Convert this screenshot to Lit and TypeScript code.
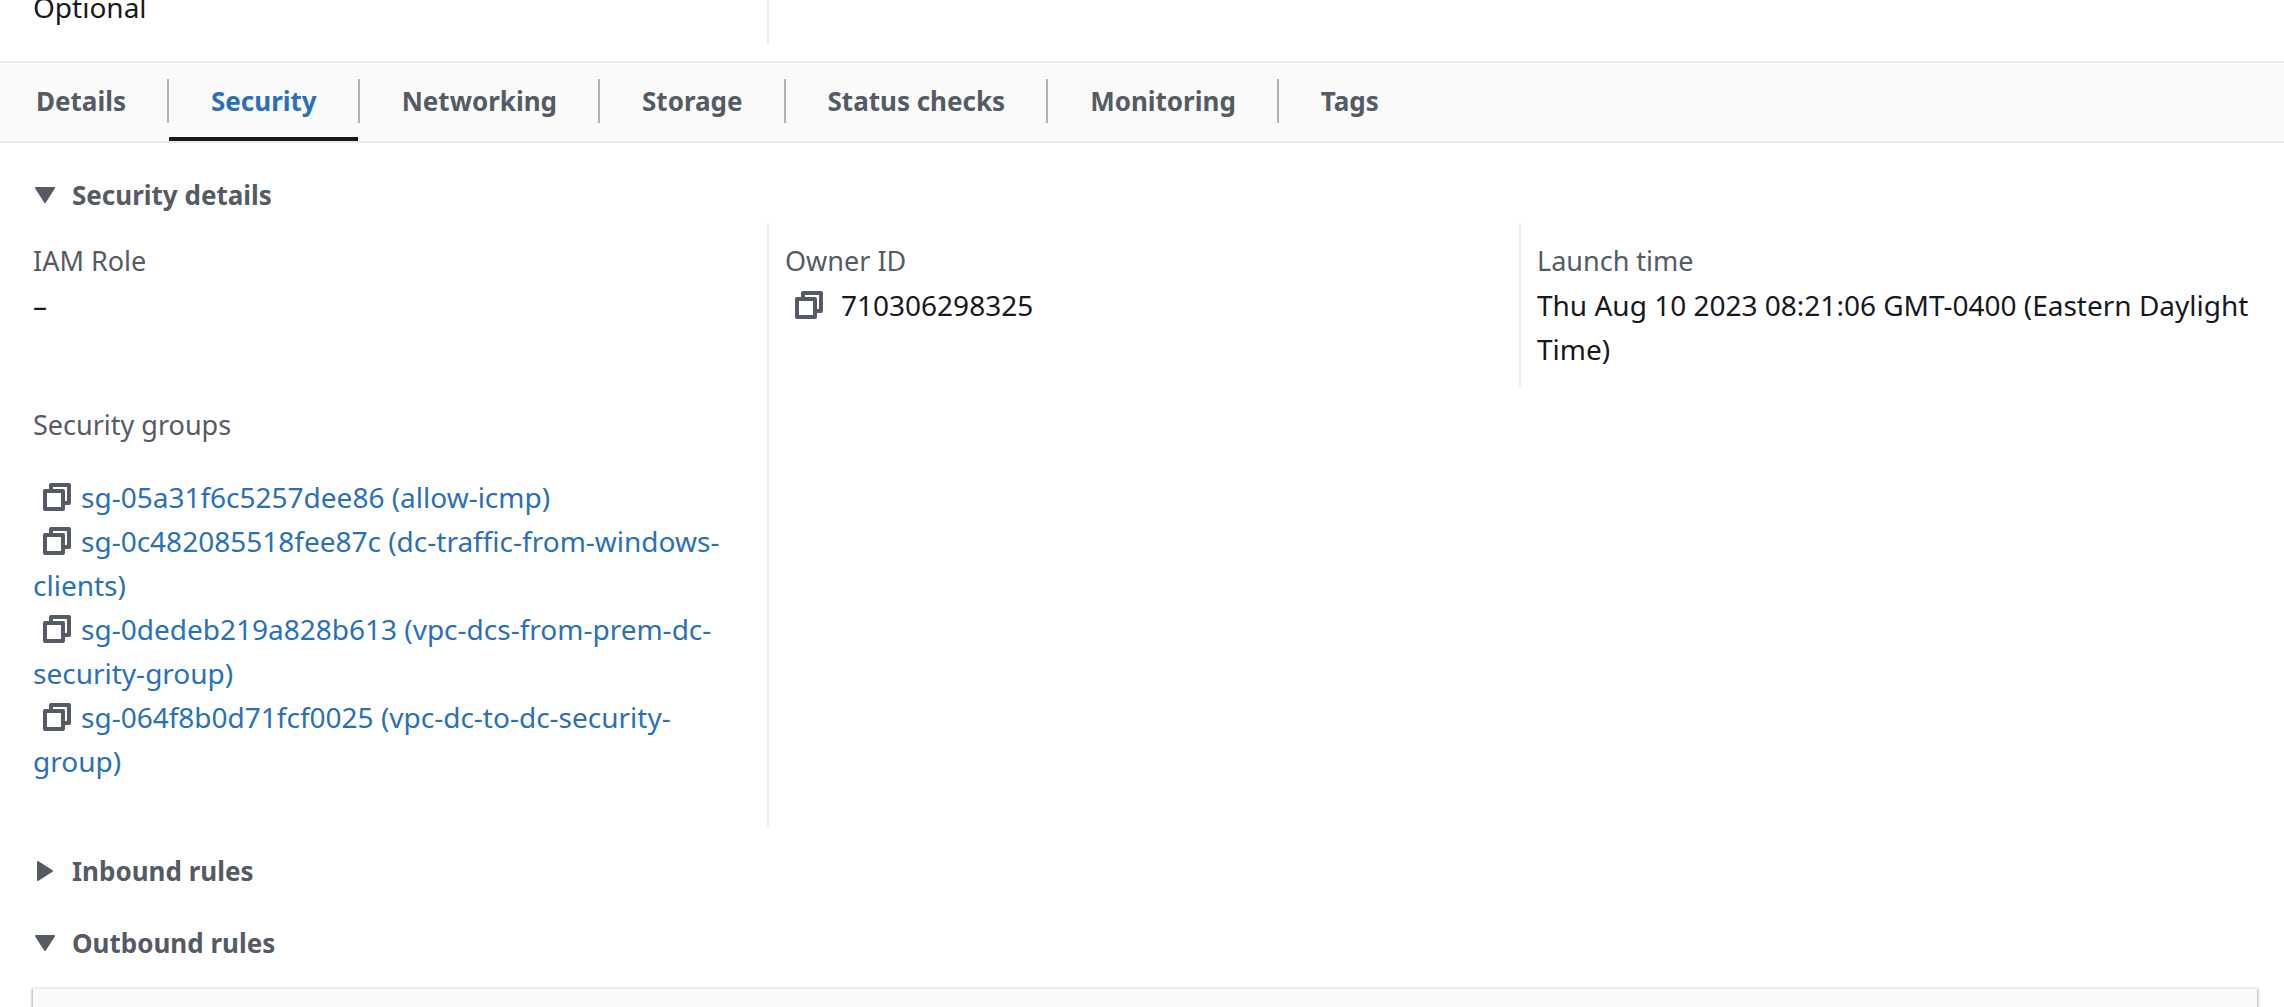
import { LitElement, html, css, svg } from "lit";
import { customElement, state, property } from "lit/decorators.js";
import { classMap } from "lit/directives/class-map.js";

const TABS = ["Details", "Security", "Networking", "Storage", "Status checks", "Monitoring", "Tags"];

const GROUPS = [
  "sg-05a31f6c5257dee86 (allow-icmp)",
  "sg-0c482085518fee87c (dc-traffic-from-windows-clients)",
  "sg-0dedeb219a828b613 (vpc-dcs-from-prem-dc-security-group)",
  "sg-064f8b0d71fcf0025 (vpc-dc-to-dc-security-group)",
];

@customElement("copy-button")
export class CopyButton extends LitElement {
  @property() value = "";

  static styles = css`
    :host {
      display: inline-block;
      vertical-align: top;
    }
    .copy {
      display: flex;
      align-items: center;
      height: 44px;
      margin: 0;
      padding: 0 10px;
      border: 0;
      background: none;
      color: #545b64;
      cursor: pointer;
    }
    .icon {
      display: block;
      width: 28px;
      height: 28px;
    }
  `;

  private copy() {
    navigator.clipboard?.writeText(this.value);
  }

  render() {
    return html`<button class="copy" type="button" aria-label="Copy ${this.value}" @click=${this.copy}>
      <svg class="icon" viewBox="0 0 28 28" fill="none" stroke="currentColor" stroke-width="4" stroke-linejoin="round" aria-hidden="true">
        <path d="M8 6V2H26V20H22" />
        <rect x="2" y="8" width="18" height="18" />
      </svg>
    </button>`;
  }
}

@customElement("expandable-heading")
export class ExpandableHeading extends LitElement {
  @property() label = "";
  @property({ type: Boolean }) open = false;

  static styles = css`
    :host {
      display: block;
    }
    .heading {
      margin: 0;
      font-size: 26px;
      line-height: 44px;
    }
    .toggle {
      display: flex;
      align-items: center;
      gap: 16px;
      margin: 0;
      padding: 0;
      border: 0;
      background: none;
      color: #545b64;
      font: inherit;
      font-weight: 700;
      cursor: pointer;
    }
    .caret {
      width: 22px;
      height: 22px;
    }
  `;

  render() {
    const shape = this.open
      ? svg`<path d="M2 4H20L11 18Z" />`
      : svg`<path d="M4 2V20L18 11Z" />`;
    return html`<h2 class="heading">
      <button class="toggle" type="button" aria-expanded=${this.open ? "true" : "false"}>
        <svg class="caret" viewBox="0 0 22 22" fill="currentColor" stroke="currentColor" stroke-width="2" stroke-linejoin="round" aria-hidden="true">
          ${shape}
        </svg>
        ${this.label}
      </button>
    </h2>`;
  }
}

@customElement("app-root")
export class AppRoot extends LitElement {
  @state() private tab = "Security";
  @state() private detailsOpen = true;
  @state() private inboundOpen = false;
  @state() private outboundOpen = true;

  static styles = css`
    :host {
      display: flex;
      flex-direction: column;
      height: 100vh;
      overflow: hidden;
      background: #fff;
      color: #16191f;
      font-family: "Noto Sans", "Open Sans", sans-serif;
      font-size: 28px;
      line-height: 44px;
    }
    .columns {
      display: grid;
      grid-template-columns: repeat(3, minmax(0, 1fr));
      padding: 0 13px 0 15px;
    }
    .column {
      padding: 16px;
      border-left: 2px solid transparent;
    }
    .ruled {
      border-left-color: #eaeded;
    }
    .short {
      align-self: start;
    }
    .summary {
      flex: none;
      height: 45px;
      align-content: end;
      overflow: hidden;
    }
    .tabs {
      flex: none;
      display: flex;
      align-items: stretch;
      margin-top: 16px;
      border-top: 2px solid #eaeded;
      border-bottom: 2px solid #eaeded;
      background: #fafafa;
      font-size: 26px;
    }
    .tab {
      display: flex;
      flex-direction: column;
      align-items: stretch;
      margin: 0;
      padding: 0;
      border: 0;
      background: none;
      color: #545b64;
      font: inherit;
      font-weight: 700;
      cursor: pointer;
    }
    .tab-label {
      display: block;
      margin: 16px 0 14px;
      padding: 0 41px 0 42px;
      border-right: 2px solid #aab7b8;
    }
    .tab:first-child .tab-label {
      padding-left: 36px;
    }
    .tab:last-child .tab-label {
      border-right-color: transparent;
    }
    .tab-mark {
      height: 4px;
      margin-right: 2px;
    }
    .active {
      color: #2a70b8;
    }
    .active .tab-mark {
      background: #16191f;
    }
    .panel {
      flex: 1 0 auto;
      display: flex;
      flex-direction: column;
      padding-top: 30px;
    }
    .section-head {
      padding: 0 34px;
    }
    .details {
      margin: 6px 0 22px;
    }
    .field {
      margin: 0;
    }
    .label {
      color: #545b64;
      font-size: 27px;
    }
    .value {
      margin: 0;
    }
    .copyable {
      display: flex;
      gap: 8px;
    }
    .groups {
      margin: 76px 0 28px;
    }
    .group-list {
      margin: 28px 0 0;
      padding: 0;
      list-style: none;
    }
    .link {
      color: #2a70b8;
      text-decoration: none;
    }
    .inbound {
      margin-bottom: 28px;
    }
    .rules {
      flex: 1 0 64px;
      margin: 22px 27px 0 33px;
      border-top: 2px solid #eaeded;
      background: #fafafa;
      box-shadow:
        0 2px 2px rgba(0, 28, 36, 0.3),
        2px 2px 2px rgba(0, 28, 36, 0.15),
        -2px 2px 2px rgba(0, 28, 36, 0.15);
    }
  `;

  private renderTab(name: string) {
    const active = name === this.tab;
    return html`<button
      class=${classMap({ tab: true, active })}
      type="button"
      role="tab"
      aria-selected=${active ? "true" : "false"}
      @click=${() => (this.tab = name)}
    ><span class="tab-label">${name}</span><span class="tab-mark"></span></button>`;
  }

  private renderDetails() {
    return html`<div class="columns details">
      <div class="column">
        <dl class="field">
          <dt class="label">IAM Role</dt>
          <dd class="value">–</dd>
        </dl>
        <dl class="field groups">
          <dt class="label">Security groups</dt>
          <dd class="value">
            <ul class="group-list">
              ${GROUPS.map(
                (g) => html`<li><copy-button .value=${g.split(" ")[0]}></copy-button><a class="link" href="#${g.split(" ")[0]}">${g}</a></li>`
              )}
            </ul>
          </dd>
        </dl>
      </div>
      <div class="column ruled">
        <dl class="field">
          <dt class="label">Owner ID</dt>
          <dd class="value copyable"><copy-button value="710306298325"></copy-button>710306298325</dd>
        </dl>
      </div>
      <div class="column ruled short">
        <dl class="field">
          <dt class="label">Launch time</dt>
          <dd class="value">Thu Aug 10 2023 08:21:06 GMT-0400 (Eastern Daylight Time)</dd>
        </dl>
      </div>
    </div>`;
  }

  render() {
    return html`
      <div class="columns summary">
        <div class="column">Optional</div>
        <div class="column ruled">&nbsp;</div>
      </div>
      <div class="tabs" role="tablist">${TABS.map((t) => this.renderTab(t))}</div>
      <main class="panel">
        <expandable-heading
          class="section-head"
          label="Security details"
          ?open=${this.detailsOpen}
          @click=${() => (this.detailsOpen = !this.detailsOpen)}
        ></expandable-heading>
        ${this.detailsOpen ? this.renderDetails() : ""}
        <expandable-heading
          class="section-head inbound"
          label="Inbound rules"
          ?open=${this.inboundOpen}
          @click=${() => (this.inboundOpen = !this.inboundOpen)}
        ></expandable-heading>
        <expandable-heading
          class="section-head"
          label="Outbound rules"
          ?open=${this.outboundOpen}
          @click=${() => (this.outboundOpen = !this.outboundOpen)}
        ></expandable-heading>
        ${this.outboundOpen ? html`<section class="rules" aria-label="Outbound rules"></section>` : ""}
      </main>
    `;
  }
}
